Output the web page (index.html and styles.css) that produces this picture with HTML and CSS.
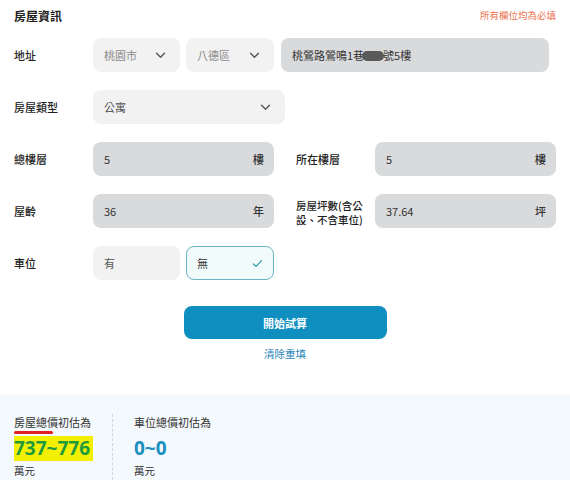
FILE: index.html
```html
<!DOCTYPE html>
<html lang="zh-Hant">
<head>
<meta charset="utf-8">
<link rel="stylesheet" href="styles.css">
</head>
<body>
<div class="form">
  <div class="header">
    <h2 class="title">房屋資訊</h2>
    <span class="required">所有欄位均為必填</span>
  </div>

  <div class="row">
    <div class="label">地址</div>
    <div class="addr">
      <div class="select sm"><span class="ph">桃園市</span><svg class="chev" viewBox="0 0 12 8"><path d="M1.5 1.5 L6 6 L10.5 1.5"/></svg></div>
      <div class="select sm"><span class="ph">八德區</span><svg class="chev" viewBox="0 0 12 8"><path d="M1.5 1.5 L6 6 L10.5 1.5"/></svg></div>
      <div class="input addr-input"><span>桃鶯路鶯鳴1巷<span class="blur"></span>號5樓</span></div>
    </div>
  </div>

  <div class="row">
    <div class="label">房屋類型</div>
    <div class="select type"><span class="val">公寓</span><svg class="chev" viewBox="0 0 12 8"><path d="M1.5 1.5 L6 6 L10.5 1.5"/></svg></div>
  </div>

  <div class="row">
    <div class="label">總樓層</div>
    <div class="input half"><span>5</span><span class="unit">樓</span></div>
    <div class="label second">所在樓層</div>
    <div class="input half"><span>5</span><span class="unit">樓</span></div>
  </div>

  <div class="row">
    <div class="label">屋齡</div>
    <div class="input half"><span>36</span><span class="unit">年</span></div>
    <div class="label second two"><span class="line">房屋坪數(含公</span><span class="line">設、不含車位)</span></div>
    <div class="input half"><span>37.64</span><span class="unit">坪</span></div>
  </div>

  <div class="row">
    <div class="label">車位</div>
    <div class="choices">
      <div class="choice">有</div>
      <div class="choice active">無<svg class="check" viewBox="0 0 12 10"><path d="M1.5 5.5 L4.5 8.2 L10.5 1.8"/></svg></div>
    </div>
  </div>

  <div class="actions">
    <button class="btn">開始試算</button>
    <a class="reset">清除重填</a>
  </div>
</div>

<div class="result">
  <div class="res-col first">
    <div class="res-label"><span class="ul">房屋總</span>價初估為</div>
    <div class="res-num green"><span class="hl">737~776</span></div>
    <div class="res-unit">萬元</div>
  </div>
  <div class="res-col second">
    <div class="res-label">車位總價初估為</div>
    <div class="res-num blue">0~0</div>
    <div class="res-unit">萬元</div>
  </div>
</div>
</body>
</html>
```

FILE: styles.css
```css
* { box-sizing: border-box; }
html, body {
  margin: 0;
  padding: 0;
  background: #fff;
  font-family: "Noto Sans CJK TC", "Noto Sans", sans-serif;
  color: #333;
}
body { width: 570px; height: 480px; overflow: hidden; }

.form {
  padding: 0 14px 0 14px;
  height: 395px;
  background: #fff;
}

.header {
  display: flex;
  justify-content: space-between;
  align-items: center;
  height: 28px;
  padding-top: 2px;
  margin-bottom: 10px;
}
.title {
  margin: 0;
  font-size: 12px;
  font-weight: 700;
  color: #222;
}
.required {
  font-size: 9.5px;
  color: #ee7350;
}

.row {
  display: flex;
  align-items: center;
  height: 34px;
  margin-bottom: 18px;
}
.label {
  width: 79px;
  flex: none;
  font-size: 11px;
  font-weight: 500;
  color: #222;
}
.label.second { margin-left: 22px; }
.label.two {
  display: flex;
  flex-direction: column;
  font-size: 10.5px;
  line-height: 14px;
  padding-top: 4px;
}
.line { white-space: nowrap; }

.addr {
  display: flex;
  gap: 6px;
  width: 456px;
}

.select {
  display: flex;
  align-items: center;
  justify-content: space-between;
  height: 34px;
  border-radius: 8px;
  background: #f2f2f2;
  padding: 0 14px 0 11px;
  font-size: 11px;
}
.select.sm { width: 87px; flex: none; }
.select.sm + .select.sm { width: 88px; }
.select.type { width: 192px; padding-right: 14px; }
.ph { color: #8a8a8a; }
.val { color: #555; }
.chev {
  width: 11px;
  height: 7px;
  fill: none;
  stroke: #555;
  stroke-width: 1.6;
  stroke-linecap: round;
  stroke-linejoin: round;
}

.input {
  display: flex;
  align-items: center;
  justify-content: space-between;
  height: 34px;
  border-radius: 8px;
  background: #d9dadb;
  padding: 0 10px 0 11px;
  font-size: 11px;
  color: #333;
}
.input.half { width: 181px; flex: none; }
.addr-input { width: 268px; margin-left: 1px; flex: none; }
.unit { font-size: 11px; color: #333; font-weight: 500; }
.blur {
  display: inline-block;
  width: 22px;
  height: 10px;
  border-radius: 5px;
  background: #5a5a5a;
  vertical-align: -1px;
  margin: 0 -1px 0 -2px;
}

.choices { display: flex; gap: 6px; }
.choice {
  display: flex;
  align-items: center;
  justify-content: space-between;
  width: 87px;
  height: 34px;
  border-radius: 8px;
  background: #f2f2f2;
  padding: 0 10px 0 11px;
  font-size: 11px;
  color: #555;
}
.choice.active {
  width: 88px;
  background: #f1fbfc;
  border: 1px solid #6bb5c2;
  color: #333;
  padding-left: 10px;
}
.check {
  width: 11px;
  height: 9px;
  fill: none;
  stroke: #3b9fb0;
  stroke-width: 1.5;
  stroke-linecap: round;
  stroke-linejoin: round;
}

.actions {
  display: flex;
  flex-direction: column;
  align-items: center;
  padding-top: 8px;
}
.btn {
  width: 203px;
  height: 33px;
  border: none;
  border-radius: 8px;
  background: #0e8fc0;
  color: #fff;
  font-family: inherit;
  font-size: 11px;
  font-weight: 700;
}
.reset {
  margin-top: 7px;
  font-size: 10.5px;
  color: #2a86b4;
}

.result {
  display: flex;
  height: 85px;
  background: #f3f9fc;
  padding: 19px 0 0 14px;
}
.res-col { display: flex; flex-direction: column; }
.res-col.first {
  width: 99px;
  border-right: 1px dashed #cfd6da;
}
.res-col.second { padding-left: 21px; }
.res-label {
  font-size: 11px;
  color: #333;
  line-height: 16px;
}
.ul {
  display: inline-block;
  position: relative;
}
.ul::after {
  content: "";
  position: absolute;
  left: 0;
  right: -6px;
  bottom: -4px;
  height: 3px;
  border-radius: 2px;
  background: #e11f1f;
}
.res-num {
  margin-top: 6px;
  font-family: "Noto Sans", sans-serif;
  font-size: 19px;
  font-weight: 700;
  line-height: 25px;
  height: 25px;
}
.green { color: #1f9a3f; }
.blue { color: #1b8fc0; }
.hl {
  display: inline-block;
  background: #f2f000;
  padding: 0 3px 0 0;
  height: 25px;
}
.res-unit {
  margin-top: 2px;
  font-size: 10.5px;
  color: #333;
}
```
